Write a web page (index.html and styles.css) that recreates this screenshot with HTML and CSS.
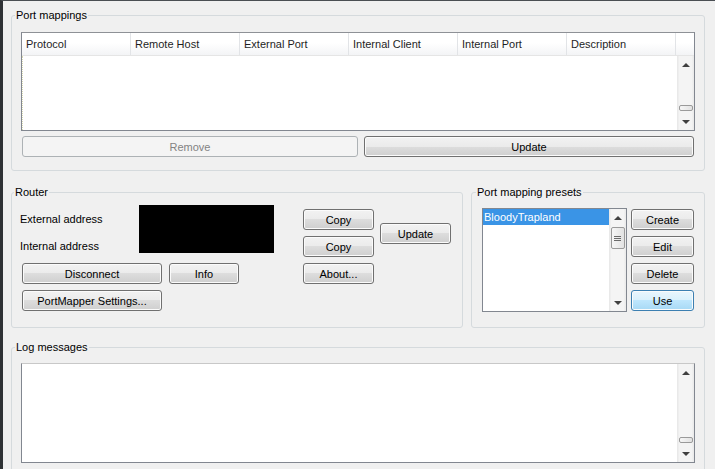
FILE: index.html
```html
<!DOCTYPE html>
<html lang="en">
<head>
    <meta charset="UTF-8">
    <title>PortMapper</title>
    <link rel="stylesheet" href="styles.css">
</head>
<body>
<fieldset class="group mappings">
    <legend>Port mappings</legend>
    <div class="grid">
        <div class="grid-head">
            <div class="col">Protocol</div>
            <div class="col">Remote Host</div>
            <div class="col">External Port</div>
            <div class="col">Internal Client</div>
            <div class="col">Internal Port</div>
            <div class="col">Description</div>
            <div class="col-fill"></div>
        </div>
        <div class="grid-body">
            <div class="rows"></div>
            <div class="sbar">
                <div class="sb-btn"><span class="arr up"></span></div>
                <div class="sb-track to-end"><span class="thumb"></span></div>
                <div class="sb-btn"><span class="arr down"></span></div>
            </div>
        </div>
    </div>
    <div class="actions">
        <button class="btn remove" disabled>Remove</button>
        <button class="btn grow">Update</button>
    </div>
</fieldset>

<div class="middle">
    <fieldset class="group router">
        <legend>Router</legend>
        <div class="router-body">
            <div class="router-left">
                <div class="addr">
                    <span class="lbl">External address</span>
                    <div class="masked"></div>
                    <span class="lbl">Internal address</span>
                </div>
                <div class="btn-row">
                    <button class="btn wide">Disconnect</button>
                    <button class="btn small">Info</button>
                </div>
                <div class="btn-row">
                    <button class="btn wide">PortMapper Settings...</button>
                </div>
            </div>
            <div class="btn-col copy-col">
                <button class="btn">Copy</button>
                <button class="btn">Copy</button>
                <button class="btn">About...</button>
            </div>
            <button class="btn router-update">Update</button>
        </div>
    </fieldset>

    <fieldset class="group presets">
        <legend>Port mapping presets</legend>
        <div class="presets-body">
            <div class="listbox">
                <div class="items">
                    <div class="item sel">BloodyTrapland</div>
                </div>
                <div class="sbar">
                    <div class="sb-btn"><span class="arr up"></span></div>
                    <div class="sb-track"><span class="thumb tall"><span class="grip"></span></span></div>
                    <div class="sb-btn"><span class="arr down"></span></div>
                </div>
            </div>
            <div class="btn-col preset-btns">
                <button class="btn">Create</button>
                <button class="btn">Edit</button>
                <button class="btn">Delete</button>
                <button class="btn default">Use</button>
            </div>
        </div>
    </fieldset>
</div>

<fieldset class="group log">
    <legend>Log messages</legend>
    <div class="logbox">
        <div class="log-text"></div>
        <div class="sbar">
            <div class="sb-btn"><span class="arr up"></span></div>
            <div class="sb-track to-end"><span class="thumb"></span></div>
            <div class="sb-btn"><span class="arr down"></span></div>
        </div>
    </div>
</fieldset>
</body>
</html>
```

FILE: styles.css
```css
*{
    box-sizing: border-box;
}
body{
    margin: 0;
    height: 469px;
    overflow: hidden;
    background: #f0f0f0;
    border-top: 1px solid #4a4e53;
    border-left: 3px solid #2f3235;
    padding: 8px 10px 0 8px;
    font: 11px "Liberation Sans", Arial, sans-serif;
    color: #000;
}

/* group boxes */
.group{
    margin: 0;
    min-width: 0;
    border: 1px solid #d5dadd;
    border-radius: 3px;
    padding: 10px 9px 13px;
}
.group legend{
    padding: 0 1px;
    margin-left: -6px;
    line-height: 13px;
}

/* buttons */
.btn{
    font: inherit;
    color: #000;
    height: 21px;
    padding: 0;
    border: 1px solid #707070;
    border-radius: 3px;
    background: linear-gradient(#f2f2f2 0%, #ebebeb 50%, #dddddd 50%, #cfcfcf 100%);
    box-shadow: inset 0 0 0 1px #fbfbfb;
}
.btn.remove{
    border-color: #adb2b5;
    background: #f4f4f4;
    color: #838383;
    box-shadow: none;
}
.btn.default{
    border-color: #3c7fb1;
    background: linear-gradient(#eaf6fd 0%, #d9f0fc 50%, #bee6fd 50%, #a7d9f5 100%);
}

/* port mapping table */
.grid{
    height: 99px;
    border: 1px solid #828790;
    border-top-color: #8e9196;
    background: #fff;
    display: flex;
    flex-direction: column;
}
.grid-head{
    display: flex;
    height: 23px;
    border-bottom: 1px solid #e5e5e5;
    background: linear-gradient(#fff 0%, #fff 45%, #f3f4f6 100%);
}
.col{
    width: 109px;
    padding-left: 4px;
    line-height: 22px;
    border-right: 1px solid #e2e4e7;
    color: #1e1e1e;
}
.col-fill{
    flex: 1;
}
.grid-body{
    flex: 1;
    display: flex;
}
.rows{
    flex: 1;
    border-left: 1px dotted #d8d8b0;
}

/* scroll bars */
.sbar{
    width: 17px;
    display: flex;
    flex-direction: column;
    background: linear-gradient(90deg, #e6e6e6 0%, #f4f4f4 15%, #f4f4f4 85%, #e9e9e9 100%);
}
.sb-btn{
    height: 17px;
    display: flex;
    align-items: center;
    justify-content: center;
}
.arr{
    width: 0;
    height: 0;
    border-left: 4px solid transparent;
    border-right: 4px solid transparent;
}
.arr.up{
    border-bottom: 4px solid #404040;
}
.arr.down{
    border-top: 4px solid #404040;
}
.sb-track{
    flex: 1;
    display: flex;
    flex-direction: column;
    align-items: center;
}
.sb-track.to-end{
    justify-content: flex-end;
    padding-bottom: 2px;
}
.thumb{
    width: 14px;
    height: 6px;
    border: 1px solid #9a9a9a;
    border-radius: 2px;
    background: linear-gradient(90deg, #f6f6f6, #e2e2e2);
}
.thumb.tall{
    height: 22px;
    margin-top: 1px;
    display: flex;
    align-items: center;
    justify-content: center;
}
.grip{
    width: 7px;
    height: 5px;
    background: repeating-linear-gradient(#6a6a6a 0 1px, transparent 1px 2px);
}

.actions{
    display: flex;
    gap: 6px;
    margin-top: 5px;
    padding: 0 1px;
}
.actions .remove{
    width: 336px;
}
.actions .grow{
    flex: 1;
}

/* router + presets row */
.middle{
    display: flex;
    gap: 8px;
    margin-top: 15px;
}
.router{
    width: 452px;
    padding: 10px 8px 15px;
}
.presets{
    flex: 1;
    padding: 10px 10px 15px;
}
.router-body{
    display: flex;
    align-items: flex-start;
}
.router-left{
    width: 254px;
    display: flex;
    flex-direction: column;
    gap: 6px;
}
.addr{
    display: grid;
    grid-template-columns: 119px 135px;
    grid-template-rows: 21px 21px;
    row-gap: 6px;
}
.lbl{
    grid-column: 1;
    line-height: 21px;
}
.masked{
    grid-column: 2;
    grid-row: 1 / 3;
    height: 48px;
    margin-top: -4px;
    background: #000;
}
.btn-row{
    display: flex;
    gap: 7px;
    padding-left: 2px;
}
.btn.wide{
    width: 140px;
}
.btn.small{
    width: 70px;
}
.btn-col{
    display: flex;
    flex-direction: column;
    gap: 6px;
}
.copy-col{
    width: 71px;
    margin-left: 29px;
}
.router-update{
    width: 71px;
    margin: 14px 0 0 6px;
}

.presets-body{
    display: flex;
    gap: 4px;
}
.listbox{
    width: 145px;
    height: 104px;
    margin-top: -1px;
    border: 1px solid #828790;
    background: #fff;
    display: flex;
}
.items{
    flex: 1;
}
.item{
    height: 16px;
    line-height: 16px;
    padding-left: 1px;
}
.item.sel{
    background: #3a94e6;
    color: #fff;
}
.preset-btns{
    width: 63px;
}

/* log */
.log{
    margin-top: 13px;
    padding: 9px 9px 20px;
}
.logbox{
    height: 100px;
    border: 1px solid #828790;
    border-top-color: #c8c8c8;
    background: #fff;
    display: flex;
}
.log-text{
    flex: 1;
}
```
